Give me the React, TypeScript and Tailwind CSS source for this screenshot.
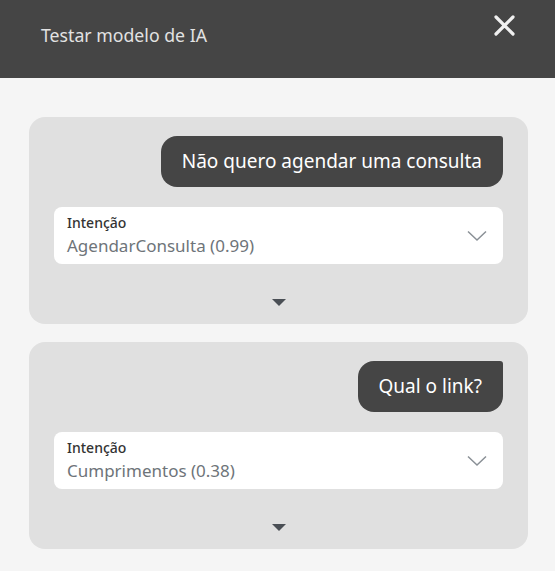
import React from "react";

function Card({ msg, value }: { msg: string; value: string }) {
  return (
    <div className="flex flex-col rounded-[16px] bg-[#e0e0e0] px-[25px] pt-[19px] pb-[18px]">
      <div className="flex justify-end">
        <div className="flex h-[51px] items-center rounded-[16px] rounded-tr-[3px] bg-[#454545] px-[21px] text-[19px] text-white">
          {msg}
        </div>
      </div>
      <div className="mt-[20px] flex h-[57px] items-center rounded-[8px] bg-white pl-[13px] pr-[16px]">
        <div className="flex flex-1 flex-col">
          <span className="text-[14px] font-medium leading-[18px] text-[#333]">Intenção</span>
          <span className="mt-[2px] text-[17px] leading-[24px] text-[#6e7479]">{value}</span>
        </div>
        <svg width="20" height="12" viewBox="0 0 20 12" fill="none" stroke="#8a9096" strokeWidth="1.5">
          <path d="M1 1.5 L10 10 L19 1.5" />
        </svg>
      </div>
      <div className="mt-[35px] flex justify-center">
        <svg width="14" height="7" viewBox="0 0 14 7">
          <path d="M0 0 H14 L7 7 Z" fill="#4a4f55" />
        </svg>
      </div>
    </div>
  );
}

export default function App() {
  return (
    <div className="h-[571px] w-[555px] bg-[#f5f5f5]" style={{ fontFamily: "'Noto Sans', sans-serif" }}>
      <div className="flex h-[78px] items-start justify-between bg-[#454545]">
        <div className="pl-[41px] pt-[22px] text-[17.7px] text-[#e2e2e2]">Testar modelo de IA</div>
        <svg className="mr-[40px] mt-[15px]" width="21" height="21" viewBox="0 0 21 21" stroke="#f0f0f0" strokeWidth="3.2" strokeLinecap="round">
          <path d="M2 2 L19 19 M19 2 L2 19" />
        </svg>
      </div>
      <div className="flex flex-col gap-[18px] pl-[29px] pr-[27px] pt-[39px]">
        <Card msg="Não quero agendar uma consulta" value="AgendarConsulta (0.99)" />
        <Card msg="Qual o link?" value="Cumprimentos (0.38)" />
      </div>
    </div>
  );
}
